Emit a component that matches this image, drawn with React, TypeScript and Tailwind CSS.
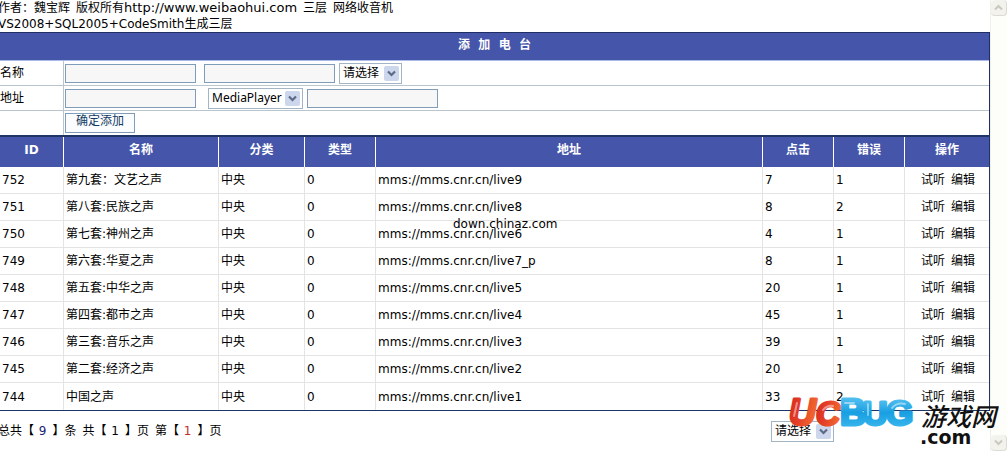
import React from 'react';

type Station = {
  id: number;
  name: string;
  url: string;
  clicks: number;
  errors: number;
};

const stations: Station[] = [
  { id: 752, name: '第九套：文艺之声', url: 'mms://mms.cnr.cn/live9', clicks: 7, errors: 1 },
  { id: 751, name: '第八套:民族之声', url: 'mms://mms.cnr.cn/live8', clicks: 8, errors: 2 },
  { id: 750, name: '第七套:神州之声', url: 'mms://mms.cnr.cn/live6', clicks: 4, errors: 1 },
  { id: 749, name: '第六套:华夏之声', url: 'mms://mms.cnr.cn/live7_p', clicks: 8, errors: 1 },
  { id: 748, name: '第五套:中华之声', url: 'mms://mms.cnr.cn/live5', clicks: 20, errors: 1 },
  { id: 747, name: '第四套:都市之声', url: 'mms://mms.cnr.cn/live4', clicks: 45, errors: 1 },
  { id: 746, name: '第三套:音乐之声', url: 'mms://mms.cnr.cn/live3', clicks: 39, errors: 1 },
  { id: 745, name: '第二套:经济之声', url: 'mms://mms.cnr.cn/live2', clicks: 20, errors: 1 },
  { id: 744, name: '中国之声', url: 'mms://mms.cnr.cn/live1', clicks: 33, errors: 2 },
];

const columns = ['ID', '名称', '分类', '类型', '地址', '点击', '错误', '操作'];

function TextBox({ label }: { label: string }) {
  return (
    <input
      type="text"
      aria-label={label}
      className="h-[19px] w-[131px] border border-[#7f9db9] bg-[#f7f7f7] px-1"
    />
  );
}

function Picker({ label, option, width }: { label: string; option: string; width: string }) {
  return (
    <div className={'relative ' + width}>
      <select
        aria-label={label}
        className="block h-[21px] w-full appearance-none border border-[#a3b4c4] bg-white pl-[3px] font-['Noto_Sans','Noto_Sans_CJK_SC',sans-serif] leading-4 text-black"
      >
        <option>{option}</option>
      </select>
      <svg
        className="pointer-events-none absolute top-[3px] right-[3px]"
        width="15"
        height="15"
        viewBox="0 0 15 15"
        aria-hidden="true"
      >
        <rect width="15" height="15" rx="2" fill="#ccd6ec" />
        <path d="M4 5.5 7.5 9 11 5.5" fill="none" stroke="#5c6a86" strokeWidth="2.2" />
      </svg>
    </div>
  );
}

function ScrollButton({ label, path }: { label: string; path: string }) {
  return (
    <button
      type="button"
      aria-label={label}
      className="flex h-4 w-full items-center justify-center rounded-sm border-r border-b border-[#dcdcd4] bg-[#f3f3ee]"
    >
      <svg width="9" height="9" viewBox="0 0 9 9" aria-hidden="true">
        <path d={path} fill="none" stroke="#c9c9c0" strokeWidth="2" />
      </svg>
    </button>
  );
}

function Logo() {
  return (
    <svg
      className="pointer-events-none absolute right-[-9px] bottom-0"
      width="212"
      height="60"
      viewBox="0 0 212 60"
      aria-label="UCBUG 游戏网 .com"
    >
      <defs>
        <linearGradient id="red" x1="0" y1="0" x2="1" y2="0.3">
          <stop offset="0" stopColor="#d4281f" />
          <stop offset="0.5" stopColor="#e5402a" />
          <stop offset="1" stopColor="#f0682e" />
        </linearGradient>
        <linearGradient id="blue" x1="0" y1="0" x2="0" y2="1">
          <stop offset="0" stopColor="#6accf4" />
          <stop offset="0.5" stopColor="#189fe2" />
          <stop offset="1" stopColor="#43bdf0" />
        </linearGradient>
      </defs>
      <g fontFamily="'Liberation Sans', sans-serif" fontWeight="700" strokeLinejoin="round">
        <g fontStyle="italic" fill="url(#red)" stroke="url(#red)" strokeWidth="3">
          <text x="2" y="34" fontSize="37">U</text>
          <text x="29" y="34" fontSize="33">C</text>
        </g>
        <g fill="url(#blue)" stroke="url(#blue)" strokeWidth="3">
          <text x="53" y="34" fontSize="36">B</text>
          <text x="76" y="34" fontSize="34">U</text>
          <text x="99" y="34" fontSize="35">G</text>
        </g>
      </g>
      <path d="M10 12 7 25M36 19q4-5 10-4M58 12h9M81 13v11M105 17q5-6 13-4" fill="none" stroke="#fff" strokeOpacity="0.45" strokeWidth="2" strokeLinecap="round" />
      <text
        x="134"
        y="35"
        fontSize="25"
        fontStyle="italic"
        fontWeight="500"
        fontFamily="'Noto Sans CJK SC', sans-serif"
        fill="#111"
      >
        游戏网
      </text>
      <text x="133" y="53" fontSize="19" fontWeight="700" fontFamily="'DejaVu Sans', sans-serif" fill="#111">
        .com
      </text>
    </svg>
  );
}

export default function App() {
  return (
    <div className="flex min-h-screen overflow-hidden bg-white font-['DejaVu_Sans','Noto_Sans_CJK_SC',sans-serif] text-xs leading-4 text-black">
      <main className="relative min-w-0 flex-1">
        <header className="-ml-0.5 h-8 whitespace-nowrap">
          <p className="flex gap-1.5">
            <span>作者：魏宝辉</span>
            <span>
              版权所有<span className="text-[13px]">http://www.weibaohui.com</span>
            </span>
            <span>三层</span>
            <span>网络收音机</span>
          </p>
          <p>VS2008+SQL2005+CodeSmith生成三层</p>
        </header>

        <form onSubmit={(e) => e.preventDefault()} className="border-t border-r border-[#1f2f66]">
          <h1 className="flex h-[28px] items-center justify-center border-b border-[#a9bbe6] bg-[#4455aa] pb-1 font-bold text-white">
            添&nbsp;&nbsp;加&nbsp;&nbsp;电&nbsp;&nbsp;台
          </h1>
          <div className="flex h-[25px] border-b border-[#b9c4cc]">
            <div className="w-16 border-r border-[#b9c4cc] pt-1">名称</div>
            <div className="flex items-center px-px">
              <TextBox label="名称" />
              <div className="ml-2 flex items-center gap-1">
                <TextBox label="名称备注" />
                <Picker label="分类" option="请选择" width="w-[63px]" />
              </div>
            </div>
          </div>
          <div className="flex h-[25px] border-b border-[#b9c4cc]">
            <div className="w-16 border-r border-[#b9c4cc] pt-1">地址</div>
            <div className="flex items-center px-px">
              <TextBox label="地址" />
              <div className="ml-3 flex items-center gap-1">
                <Picker label="类型" option="MediaPlayer" width="w-[95px]" />
                <TextBox label="地址备注" />
              </div>
            </div>
          </div>
          <div className="flex h-6">
            <div className="w-16 border-r border-[#b9c4cc]" />
            <div className="flex items-center px-px">
              <button
                type="submit"
                className="flex h-5 w-[70px] items-center justify-center border border-[#7f9db9] bg-[#fafcfd] pb-1 text-[#123a63]"
              >
                确定添加
              </button>
            </div>
          </div>
        </form>

        <div className="border-t-2 border-r border-b border-[#1f3566]">
          <table className="w-full table-fixed border-separate border-spacing-0">
            <colgroup>
              <col className="w-16" />
              <col className="w-[155px]" />
              <col className="w-[86px]" />
              <col className="w-[71px]" />
              <col />
              <col className="w-[71px]" />
              <col className="w-[71px]" />
              <col className="w-[84px]" />
            </colgroup>
            <thead>
              <tr className="h-[30px] bg-[#4455aa] text-white">
                {columns.map((c) => (
                  <th key={c} className="border-r border-white p-0 pb-1 last:border-r-0">
                    {c}
                  </th>
                ))}
              </tr>
            </thead>
            <tbody className="[&_td]:h-[27px] [&_td]:border-r [&_td]:border-b [&_td]:border-[#e4e4e4] [&_td]:p-0 [&_td]:pl-0.5 [&_td:last-child]:border-r-0 [&_tr:last-child_td]:border-b-0">
              {stations.map((s) => (
                <tr key={s.id}>
                  <td>{s.id}</td>
                  <td>{s.name}</td>
                  <td>中央</td>
                  <td>0</td>
                  <td>{s.url}</td>
                  <td>{s.clicks}</td>
                  <td>{s.errors}</td>
                  <td>
                    <div className="flex justify-center gap-1.5">
                      <a href="#listen">试听</a>
                      <a href="#edit">编辑</a>
                    </div>
                  </td>
                </tr>
              ))}
            </tbody>
          </table>
        </div>

        <footer className="-ml-0.5 flex h-10 items-center justify-between pr-[156px]">
          <p className="flex gap-1.5 whitespace-nowrap">
            <span>
              总共【 <span className="mr-1.5 ml-px text-[#1c1c78]">9</span>】条
            </span>
            <span>
              共【 <span className="mr-1.5 ml-px">1</span>】页
            </span>
            <span>
              第【 <span className="mr-1.5 ml-px text-[#c03028]">1</span>】页
            </span>
          </p>
          <Picker label="页码" option="请选择" width="w-[63px]" />
        </footer>

        <span className="pointer-events-none absolute top-[216px] left-[453px]">down.chinaz.com</span>
        <Logo />
      </main>

      <aside className="flex w-[17px] flex-col justify-between border-l border-[#f0f0ea] bg-[#fdfdfa]">
        <ScrollButton label="向上滚动" path="M1 6.5 4.5 3 8 6.5" />
        <ScrollButton label="向下滚动" path="M1 2.5 4.5 6 8 2.5" />
      </aside>
    </div>
  );
}
